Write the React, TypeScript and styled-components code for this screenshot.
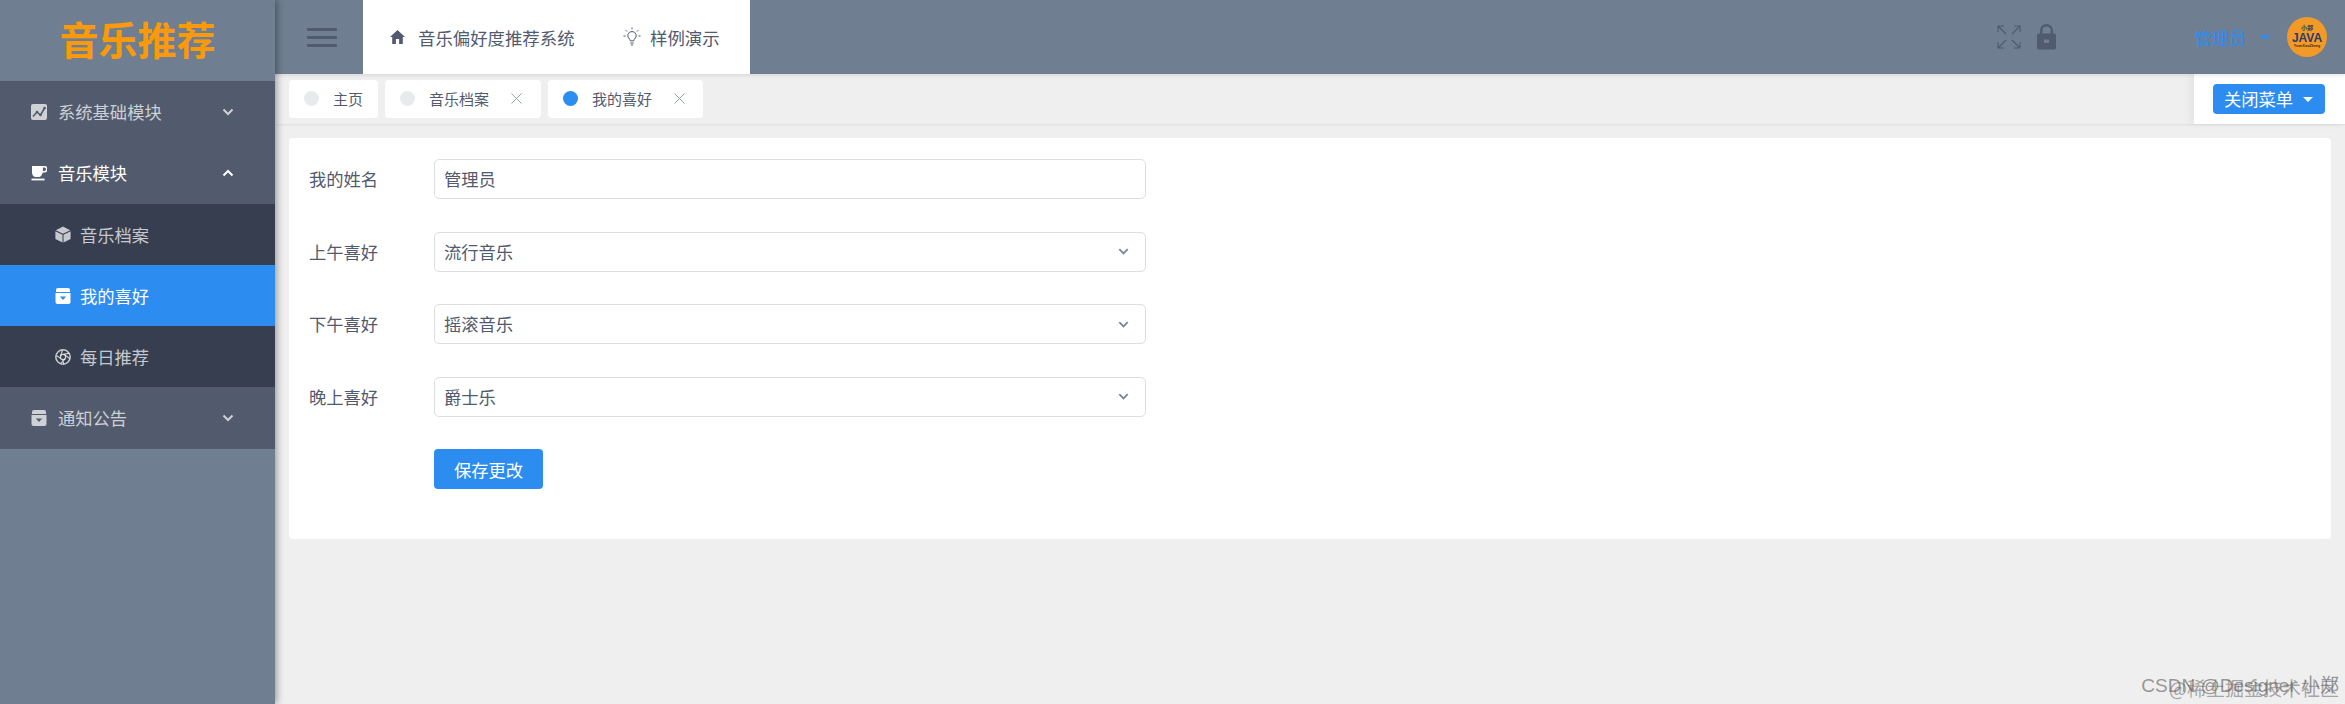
import React from "react";
import styled, { createGlobalStyle } from "styled-components";

const CJK = `"Noto Sans CJK SC", "Liberation Sans", sans-serif`;

const Global = createGlobalStyle`
  html, body { margin: 0; padding: 0; height: 100%; background: #efefef; }
  body { font-family: ${CJK}; overflow: hidden; }
  #root { height: 100%; }
  * { box-sizing: border-box; }
`;

const Shell = styled.div`
  display: flex;
  height: 704px;
  width: 2345px;
  position: relative;
  overflow: hidden;
`;

const Sidebar = styled.aside`
  flex: 0 0 275px;
  height: 100%;
  background: #6f7e91;
  box-shadow: 2px 0 7px rgba(0, 0, 0, 0.35);
  position: relative;
  z-index: 3;
  display: flex;
  flex-direction: column;
`;

const Logo = styled.div`
  height: 81px;
  display: flex;
  align-items: center;
  justify-content: center;
  color: #fa9a0a;
  font-size: 39px;
  font-weight: 700;
  letter-spacing: 0;
  padding-right: 0;
  line-height: 1;
  transform: translateY(-2px);
`;

const MenuRow = styled.div<{ $tone: "parent" | "sub" | "active"; $lit?: boolean }>`
  height: 61.3px;
  display: flex;
  align-items: center;
  padding-left: ${(p) => (p.$tone === "parent" ? "31px" : "55px")};
  padding-right: 39px;
  font-size: 17.3px;
  gap: ${(p) => (p.$tone === "parent" ? "11px" : "9px")};
  background: ${(p) =>
    p.$tone === "parent" ? "#525b6d" : p.$tone === "sub" ? "#363e4f" : "#2d8cf0"};
  color: ${(p) =>
    p.$tone === "active" || p.$lit ? "#ffffff" : "rgba(255,255,255,0.72)"};
  svg.main { flex: 0 0 auto; }
`;

const MenuLabel = styled.span`
  flex: 1;
  line-height: 1;
  white-space: nowrap;
`;

const Main = styled.div`
  flex: 1;
  min-width: 0;
  display: flex;
  flex-direction: column;
`;

const Header = styled.header`
  height: 74px;
  background: #6f7e91;
  display: flex;
  align-items: center;
  padding-left: 32px;
  position: relative;
  z-index: 2;
  box-shadow: 0 1px 4px rgba(0, 0, 0, 0.12);
`;

const Burger = styled.div`
  width: 30px;
  height: 19px;
  display: flex;
  flex-direction: column;
  justify-content: space-between;
  margin-right: 26px;
  span { display: block; height: 3px; background: #515a6e; border-radius: 1px; }
`;

const TopNav = styled.nav`
  width: 387px;
  height: 74px;
  background: #fff;
  display: flex;
  align-items: center;
  padding-left: 27px;
  color: #515a6e;
  font-size: 17.4px;
`;

const NavItem = styled.div<{ $gap: number; $width?: number }>`
  display: flex;
  align-items: center;
  gap: ${(p) => p.$gap}px;
  ${(p) => (p.$width ? `width: ${p.$width}px;` : "")}
  white-space: nowrap;
`;

const HeaderRight = styled.div`
  margin-left: auto;
  display: flex;
  align-items: center;
  padding-right: 18px;
`;

const LockGroup = styled.div`
  display: flex;
  align-items: center;
  gap: 16px;
  margin-right: 138px;
`;

const UserName = styled.div`
  color: #2d8cf0;
  font-size: 17.3px;
  display: flex;
  align-items: center;
  gap: 14px;
  margin-right: 17px;
`;

const Avatar = styled.div`
  width: 40px;
  height: 40px;
  border-radius: 50%;
  background: #f29a28;
  display: flex;
  flex-direction: column;
  align-items: center;
  justify-content: center;
  color: #2d3a6b;
  line-height: 1;
`;

const AvatarTop = styled.span`
  font-size: 6px;
  font-weight: 700;
  color: #2f3a55;
`;

const AvatarMain = styled.span`
  font-family: "Liberation Sans", sans-serif;
  font-size: 12px;
  font-weight: 700;
  margin: 1px 0;
`;

const AvatarBottom = styled.span`
  font-family: "Liberation Sans", sans-serif;
  font-size: 3.5px;
  color: #3a2a10;
  font-weight: 700;
`;

const TabBar = styled.div`
  height: 50px;
  display: flex;
  align-items: center;
  padding-left: 14px;
  gap: 7px;
  background: #efefef;
  box-shadow: 0 1px 2px rgba(0, 0, 0, 0.07);
  position: relative;
  z-index: 1;
`;

const Tab = styled.div<{ $w: number; $close?: boolean }>`
  width: ${(p) => p.$w}px;
  height: 38px;
  background: #fff;
  border-radius: 4px;
  display: flex;
  align-items: center;
  padding-left: 15px;
  font-size: 15px;
  color: #515a6e;
  margin-top: -1px;
`;

const Dot = styled.span<{ $on?: boolean }>`
  width: 15px;
  height: 15px;
  border-radius: 50%;
  background: ${(p) => (p.$on ? "#2d8cf0" : "#e8eaec")};
  margin-right: 14px;
  flex: 0 0 auto;
`;

const TabClose = styled.span`
  margin-left: 22px;
  display: flex;
`;

const CloseArea = styled.div`
  margin-left: auto;
  width: 151px;
  height: 50px;
  background: #fff;
  display: flex;
  align-items: center;
  padding-left: 19px;
  box-shadow: -4px 0 8px rgba(0, 0, 0, 0.05);
`;

const CloseButton = styled.div`
  width: 112px;
  height: 30px;
  background: #2d8cf0;
  border-radius: 4px;
  color: #fff;
  font-size: 17.3px;
  display: flex;
  align-items: center;
  padding-left: 11px;
  gap: 10px;
  line-height: 1;
`;

const Caret = styled.span<{ $c: string }>`
  width: 0;
  height: 0;
  border-left: 5px solid transparent;
  border-right: 5px solid transparent;
  border-top: 5px solid ${(p) => p.$c};
`;

const Content = styled.div`
  flex: 1;
  padding: 14px 14px 0 14px;
  background: #efefef;
`;

const Card = styled.div`
  height: 401px;
  background: #fff;
  border-radius: 4px;
  padding: 21px 20px 0 20px;
`;

const FormRow = styled.div<{ $mb?: number }>`
  display: flex;
  align-items: center;
  height: 40px;
  margin-bottom: ${(p) => p.$mb ?? 32.5}px;
`;

const Label = styled.label`
  width: 125px;
  font-size: 17.3px;
  color: #515a6e;
  flex: 0 0 auto;
  line-height: 1;
`;

const Field = styled.div`
  width: 712px;
  height: 40px;
  border: 1px solid #dcdee2;
  border-radius: 5px;
  display: flex;
  align-items: center;
  justify-content: space-between;
  padding: 0 14px 0 9px;
  font-size: 17.3px;
  color: #515a6e;
  line-height: 1;
`;

const SaveButton = styled.div`
  width: 109px;
  height: 40px;
  background: #2d8cf0;
  border-radius: 4px;
  color: #fff;
  font-size: 17.3px;
  display: flex;
  align-items: center;
  justify-content: center;
  margin-left: 125px;
`;

const Watermark = styled.div`
  position: absolute;
  right: 6px;
  bottom: 9px;
  font-family: "Liberation Sans", ${CJK};
  font-size: 19px;
  color: rgba(90, 90, 90, 0.62);
  white-space: nowrap;
  line-height: 1;
  z-index: 5;
`;

const WatermarkOver = styled.div`
  position: absolute;
  right: 6px;
  bottom: 7px;
  font-family: ${CJK};
  font-size: 19px;
  color: rgba(90, 90, 90, 0.5);
  white-space: nowrap;
  line-height: 1;
  z-index: 5;
`;

const Chev = ({ up, color = "currentColor", size = 16 }: { up?: boolean; color?: string; size?: number }) => (
  <svg width={size} height={size} viewBox="0 0 16 16" fill="none" stroke={color} strokeWidth="2">
    <path d={up ? "M3.5 10.5L8 6l4.5 4.5" : "M3.5 5.5L8 10l4.5-4.5"} />
  </svg>
);

const ChartIcon = () => (
  <svg className="main" width="16" height="16" viewBox="0 0 16 16">
    <rect x="0" y="0" width="16" height="16" rx="2" fill="currentColor" />
    <path d="M2 12.5L6 8l3.5 3L14 3.5" fill="none" stroke="#525b6d" strokeWidth="1.6" />
    <circle cx="6" cy="8" r="1.3" fill="#525b6d" />
    <circle cx="9.5" cy="11" r="1.3" fill="#525b6d" />
    <circle cx="13.5" cy="4" r="1.3" fill="#525b6d" />
  </svg>
);

const CupIcon = () => (
  <svg className="main" width="16" height="16" viewBox="0 0 16 16">
    <path d="M1 1h12.5a2.5 2.5 0 0 1 0 6.5h-1.7C11 10 9.5 12 8 12H4.6C2.6 12 1 10 1 7.5z M11.9 2.6v3.3h1.5a1.6 1.6 0 0 0 0-3.3z" fill="currentColor" fillRule="evenodd" />
    <rect x="0.5" y="13.6" width="13" height="1.8" fill="currentColor" />
  </svg>
);

const CubeIcon = () => (
  <svg className="main" width="16" height="17" viewBox="0 0 16 17">
    <path d="M8 .6l7.2 3.6L8 7.8.8 4.2z" fill="currentColor" />
    <path d="M.4 5.2L7.5 8.7v7.7L.4 12.9z" fill="currentColor" />
    <path d="M15.6 5.2L8.5 8.7v7.7l7.1-3.5z" fill="currentColor" />
  </svg>
);

const BoxIcon = ({ hole }: { hole: string }) => (
  <svg className="main" width="16" height="16" viewBox="0 0 16 16">
    <path d="M3 0h10a2 2 0 0 1 2 2v2H1V2a2 2 0 0 1 2-2z" fill="currentColor" />
    <path d="M.5 5h15v9a2 2 0 0 1-2 2h-11a2 2 0 0 1-2-2z" fill="currentColor" />
    <path d="M8 12L4.8 8.6h6.4z" fill={hole} />
  </svg>
);

const ApertureIcon = () => (
  <svg className="main" width="16" height="16" viewBox="0 0 16 16" fill="none" stroke="currentColor">
    <circle cx="8" cy="8" r="7.2" strokeWidth="1.5" />
    <circle cx="8" cy="8" r="2.6" strokeWidth="1.2" />
    <path d="M5.6 7L7.5 1M10 6.2L14.7 9.6M10.1 9.8L5.6 14.3M6 9.6L1.2 6.6M8.4 5.4l6-1.2M7.6 10.6L8.8 15" strokeWidth="1.2" />
  </svg>
);

const HomeIcon = () => (
  <svg width="15" height="14" viewBox="0 0 15 14">
    <path d="M7.5 0L0 7h2.2v7h3.7V9h3.2v5h3.7V7H15z" fill="#515a6e" />
  </svg>
);

const BulbIcon = () => (
  <svg width="18" height="20" viewBox="0 0 18 20" fill="none" stroke="#515a6e" strokeWidth="1">
    <path d="M9 4.5a4.2 4.2 0 0 0-2.6 7.5c.6.5.8 1 .8 1.8h3.6c0-.8.2-1.3.8-1.8A4.2 4.2 0 0 0 9 4.5z" />
    <path d="M7.3 16h3.4M8 18h2M9 .5v2M2.6 3.2l1.4 1.4M15.4 3.2L14 4.6M.5 9h2M15.5 9h2" />
  </svg>
);

const ExpandIcon = () => (
  <svg width="24" height="24" viewBox="0 0 24 24" fill="none" stroke="#515a6e" strokeWidth="1.1">
    <path d="M1 7V1h6M1 1l8 8M17 1h6v6M23 1l-8 8M1 17v6h6M1 23l8-8M23 17v6h-6M23 23l-8-8" />
  </svg>
);

const LockIcon = () => (
  <svg width="19" height="26" viewBox="0 0 19 26">
    <path d="M4.2 10V6.5a5.3 5.3 0 0 1 10.6 0V10" fill="none" stroke="#515a6e" strokeWidth="2.4" />
    <rect x="0" y="9.5" width="19" height="16" rx="2" fill="#515a6e" />
    <rect x="7" y="15.5" width="5" height="3.5" fill="#6f7e91" />
  </svg>
);

const CloseX = () => (
  <svg width="11" height="11" viewBox="0 0 11 11" fill="none" stroke="#9aa1ad" strokeWidth="1">
    <path d="M.5.5l10 10M10.5.5l-10 10" />
  </svg>
);

const SelectField = ({ value }: { value: string }) => (
  <Field>
    <span>{value}</span>
    <Chev color="#808695" size={15} />
  </Field>
);

export default function App() {
  return (
    <Shell>
      <Global />
      <Sidebar>
        <Logo>音乐推荐</Logo>
        <MenuRow $tone="parent">
          <ChartIcon />
          <MenuLabel>系统基础模块</MenuLabel>
          <Chev />
        </MenuRow>
        <MenuRow $tone="parent" $lit>
          <CupIcon />
          <MenuLabel>音乐模块</MenuLabel>
          <Chev up />
        </MenuRow>
        <MenuRow $tone="sub">
          <CubeIcon />
          <MenuLabel>音乐档案</MenuLabel>
        </MenuRow>
        <MenuRow $tone="active">
          <BoxIcon hole="#2d8cf0" />
          <MenuLabel>我的喜好</MenuLabel>
        </MenuRow>
        <MenuRow $tone="sub">
          <ApertureIcon />
          <MenuLabel>每日推荐</MenuLabel>
        </MenuRow>
        <MenuRow $tone="parent">
          <BoxIcon hole="#525b6d" />
          <MenuLabel>通知公告</MenuLabel>
          <Chev />
        </MenuRow>
      </Sidebar>
      <Main>
        <Header>
          <Burger>
            <span />
            <span />
            <span />
          </Burger>
          <TopNav>
            <NavItem $gap={13} $width={233}>
              <HomeIcon />
              音乐偏好度推荐系统
            </NavItem>
            <NavItem $gap={9}>
              <BulbIcon />
              样例演示
            </NavItem>
          </TopNav>
          <HeaderRight>
            <LockGroup>
              <ExpandIcon />
              <LockIcon />
            </LockGroup>
            <UserName>
              管理员
              <Caret $c="#2d8cf0" />
            </UserName>
            <Avatar>
              <AvatarTop>小郑</AvatarTop>
              <AvatarMain>JAVA</AvatarMain>
              <AvatarBottom>YuanXiaoZheng</AvatarBottom>
            </Avatar>
          </HeaderRight>
        </Header>
        <TabBar>
          <Tab $w={89}>
            <Dot />
            主页
          </Tab>
          <Tab $w={156}>
            <Dot />
            音乐档案
            <TabClose>
              <CloseX />
            </TabClose>
          </Tab>
          <Tab $w={155}>
            <Dot $on />
            我的喜好
            <TabClose>
              <CloseX />
            </TabClose>
          </Tab>
          <CloseArea>
            <CloseButton>
              关闭菜单
              <Caret $c="#fff" />
            </CloseButton>
          </CloseArea>
        </TabBar>
        <Content>
          <Card>
            <FormRow>
              <Label>我的姓名</Label>
              <Field>管理员</Field>
            </FormRow>
            <FormRow>
              <Label>上午喜好</Label>
              <SelectField value="流行音乐" />
            </FormRow>
            <FormRow>
              <Label>下午喜好</Label>
              <SelectField value="摇滚音乐" />
            </FormRow>
            <FormRow>
              <Label>晚上喜好</Label>
              <SelectField value="爵士乐" />
            </FormRow>
            <SaveButton>保存更改</SaveButton>
          </Card>
        </Content>
      </Main>
      <Watermark>CSDN @Designer 小郑</Watermark>
      <WatermarkOver>@稀土掘金技术社区</WatermarkOver>
    </Shell>
  );
}
